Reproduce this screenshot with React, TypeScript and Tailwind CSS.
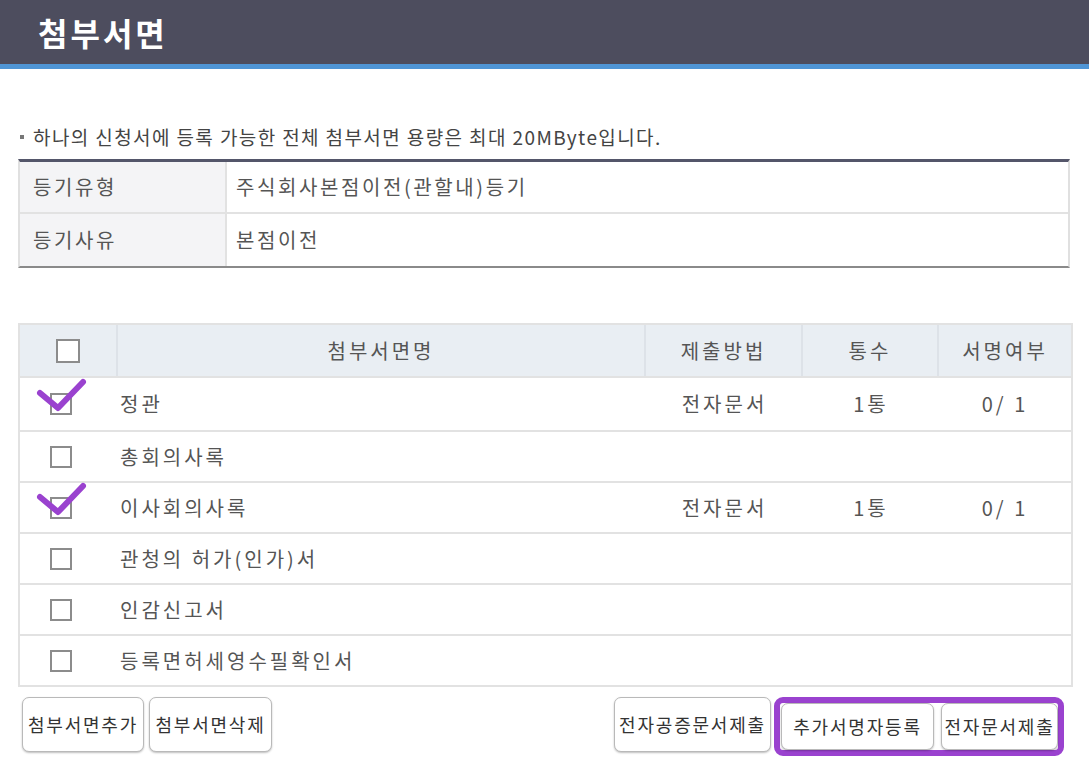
import type { ReactNode } from "react";

type Attachment = {
  name: string;
  checked: boolean;
  method?: string;
  count?: string;
  signed?: string;
};

const attachments: Attachment[] = [
  { name: "정관", checked: true, method: "전자문서", count: "1통", signed: "0/ 1" },
  { name: "총회의사록", checked: false },
  { name: "이사회의사록", checked: true, method: "전자문서", count: "1통", signed: "0/ 1" },
  { name: "관청의 허가(인가)서", checked: false },
  { name: "인감신고서", checked: false },
  { name: "등록면허세영수필확인서", checked: false },
];

const cols = "grid grid-cols-[98px_528px_157px_136px_1fr]";

function Box({ checked, size = "w-[22px] h-[22px]" }: { checked?: boolean; size?: string }) {
  return (
    <span className="relative inline-block">
      <span className={`block ${size} border-2 border-[#8c8c8c] bg-white`} />
      {checked ? (
        <svg className="absolute left-[-14px] top-[-15px]" width="52" height="36" viewBox="0 0 52 36">
          <polyline
            points="4,15 22,30 47,4"
            fill="none"
            stroke="#9a42cf"
            strokeWidth="6"
            strokeLinecap="round"
            strokeLinejoin="round"
          />
        </svg>
      ) : null}
    </span>
  );
}

function Btn({ children, className = "" }: { children: ReactNode; className?: string }) {
  return (
    <button
      className={`flex items-center justify-center rounded-[7px] border border-[#b9b9b9] bg-white text-[18px] tracking-[1.8px] text-[#333] shadow-[0_1px_2px_rgba(0,0,0,0.25)] ${className}`}
    >
      {children}
    </button>
  );
}

export default function App() {
  return (
    <div className="min-h-screen w-[1089px] bg-white font-['Noto_Sans_CJK_KR','Noto_Sans',sans-serif] text-[#555]">
      <header className="flex h-[64px] items-center bg-[#4d4d5e] px-[38px]">
        <h1 className="text-[32px] font-bold leading-none tracking-[3px] text-white">첨부서면</h1>
      </header>
      <div className="h-[5px] bg-[#4f95d5]" />

      <main className="pl-[18px] pr-[16px]">
        <p className="mt-[56px] flex h-[24px] items-center text-[19px] tracking-[1.4px] text-[#444]">
          <span className="ml-[2px] mr-[9px] inline-block h-[4px] w-[4px] bg-[#777]" />
          하나의 신청서에 등록 가능한 전체 첨부서면 용량은 최대 20MByte입니다.
        </p>

        <div className="mt-[10px] w-[1052px] border-x-2 border-t-[3px] border-b-2 border-x-[#e0e0e0] border-t-[#54566a] border-b-[#8a8a8a] text-[20px] tracking-[2.6px]">
          <div className="flex h-[52px] border-b-2 border-[#e2e2e2]">
            <div className="flex w-[207px] items-center border-r-2 border-[#e2e2e2] bg-[#f4f4f6] pl-[13px]">등기유형</div>
            <div className="flex items-center pl-[9px]">주식회사본점이전(관할내)등기</div>
          </div>
          <div className="flex h-[52px]">
            <div className="flex w-[207px] items-center border-r-2 border-[#e2e2e2] bg-[#f4f4f6] pl-[13px]">등기사유</div>
            <div className="flex items-center pl-[9px]">본점이전</div>
          </div>
        </div>

        <div className="mt-[55px] border-2 border-[#e2e2e2] text-[20px] tracking-[3px]">
          <div className={`${cols} h-[51px] bg-[#e9eef3] text-[#555]`}>
            <div className="flex items-center border-r-2 border-[#dde2e8] pl-[36px]">
              <Box size="w-[24px] h-[24px]" />
            </div>
            <div className="flex items-center justify-center border-r-2 border-[#dde2e8]">첨부서면명</div>
            <div className="flex items-center justify-center border-r-2 border-[#dde2e8]">제출방법</div>
            <div className="flex items-center justify-center border-r-2 border-[#dde2e8]">통수</div>
            <div className="flex items-center justify-center">서명여부</div>
          </div>
          {attachments.map((a, i) => (
            <div
              key={a.name}
              className={`${cols} ${i === 0 ? "h-[54px]" : "h-[51px]"} border-t-2 border-[#e2e2e2]`}
            >
              <div className="flex items-center pl-[30px]">
                <Box checked={a.checked} />
              </div>
              <div className="flex items-center pl-[2px]">{a.name}</div>
              <div className="flex items-center justify-center">{a.method}</div>
              <div className="flex items-center justify-center">{a.count}</div>
              <div className="flex items-center justify-center">{a.signed}</div>
            </div>
          ))}
        </div>

        <div className="mt-[10px] flex items-start">
          <div className="ml-[4px] flex gap-[5px]">
            <Btn className="h-[55px] w-[122px]">첨부서면추가</Btn>
            <Btn className="h-[55px] w-[123px]">첨부서면삭제</Btn>
          </div>
          <div className="ml-auto mr-[9px] flex items-start gap-[3px]">
            <Btn className="h-[55px] w-[157px]">전자공증문서제출</Btn>
            <div className="flex gap-[7px] rounded-[9px] border-[6px] border-[#9a42cf] pl-px">
              <Btn className="h-[47px] w-[153px]">추가서명자등록</Btn>
              <Btn className="h-[47px] w-[117px]">전자문서제출</Btn>
            </div>
          </div>
        </div>
      </main>
    </div>
  );
}
